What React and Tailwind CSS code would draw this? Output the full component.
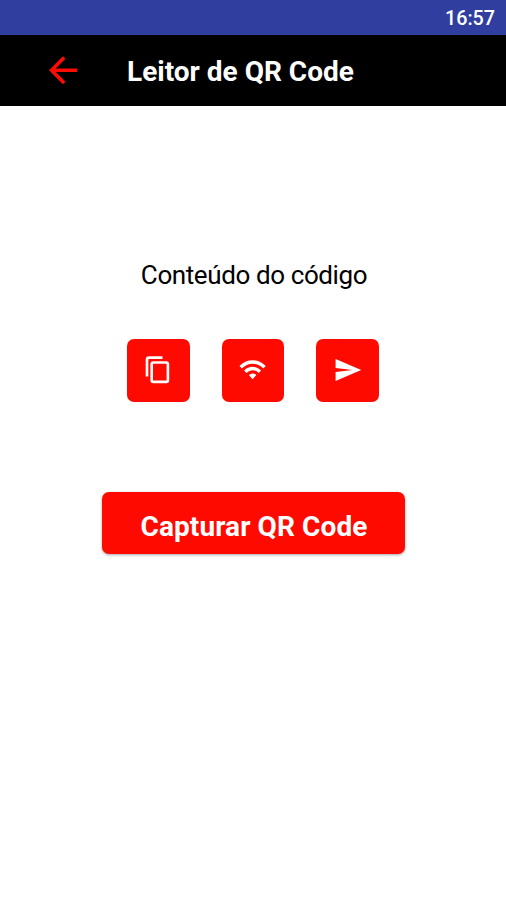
import React from "react";

function BackIcon() {
  return (
    <svg viewBox="0 0 30 30" className="mb-[2px] h-[30px] w-[30px] text-[#ff0a00]" fill="none" stroke="currentColor" strokeWidth="3.5">
      <path d="M29.2 15.3H4M16.2 2.6L3.5 15.3L16.2 28" />
    </svg>
  );
}

function CopyIcon() {
  return (
    <svg viewBox="0 0 28 30" className="mr-[1px] h-[30px] w-[28px]" fill="none" stroke="currentColor" strokeWidth="2.6" strokeLinejoin="round">
      <path d="M3 21.5V4.6Q3 2.6 5 2.6H18.5" />
      <rect x="7.7" y="7.5" width="16.2" height="19.4" rx="1.6" />
    </svg>
  );
}

function WifiIcon() {
  return (
    <svg viewBox="0 0 28 22" className="h-[22px] w-[28px]" fill="none" stroke="currentColor" strokeWidth="3.4">
      <path d="M1.7 8.2C8.4 1.2 18.8 1.2 25.5 8.2" />
      <path d="M6.3 12.7C10.5 8.4 16.7 8.4 20.9 12.7" />
      <path d="M9.9 15.9Q13.6 12.9 17.3 15.9L13.6 20.3Z" fill="currentColor" stroke="none" />
    </svg>
  );
}

function SendIcon() {
  return (
    <svg viewBox="0 0 28 24" className="h-[24px] w-[28px]" fill="currentColor">
      <path d="M1.6 1.1L27.2 12L1.6 22.9V14L18.5 12L1.6 10Z" />
    </svg>
  );
}

function IconButton({ label, children }) {
  return (
    <button aria-label={label} className="flex h-[62.5px] w-[62.5px] items-center justify-center rounded-[7px] bg-[#ff0a00] text-white">
      {children}
    </button>
  );
}

export default function App() {
  return (
    <div className="flex h-[900px] w-[506px] flex-col overflow-hidden bg-white font-['Roboto',sans-serif]">
      <div className="flex h-[35px] shrink-0 items-center justify-end bg-[#303f9f] pt-[2px] pr-[11px] text-[19.7px] font-medium text-white">
        <span>16:57</span>
      </div>
      <header className="flex h-[71px] shrink-0 items-center bg-black pl-[48px]">
        <BackIcon />
        <h1 className="ml-[49px] whitespace-nowrap pt-[2px] text-[28px] leading-[34px] font-bold text-white">Leitor de QR Code</h1>
      </header>
      <main className="flex flex-col items-center pt-[153px]">
        <p className="whitespace-nowrap pl-[2px] text-[26px] leading-[32px] tracking-[-0.4px] text-black">Conteúdo do código</p>
        <div className="mt-[48px] flex gap-[32px]">
          <IconButton label="Copiar"><CopyIcon /></IconButton>
          <IconButton label="Wi-Fi"><WifiIcon /></IconButton>
          <IconButton label="Enviar"><SendIcon /></IconButton>
        </div>
        <button className="mt-[90.5px] h-[62px] w-[303px] rounded-[7px] bg-[#ff0a00] pt-[8px] pl-[2px] text-[28px] tracking-[0.1px] font-bold whitespace-nowrap text-white shadow-[0_1px_3px_rgba(0,0,0,0.35)]">Capturar QR Code</button>
      </main>
    </div>
  );
}
